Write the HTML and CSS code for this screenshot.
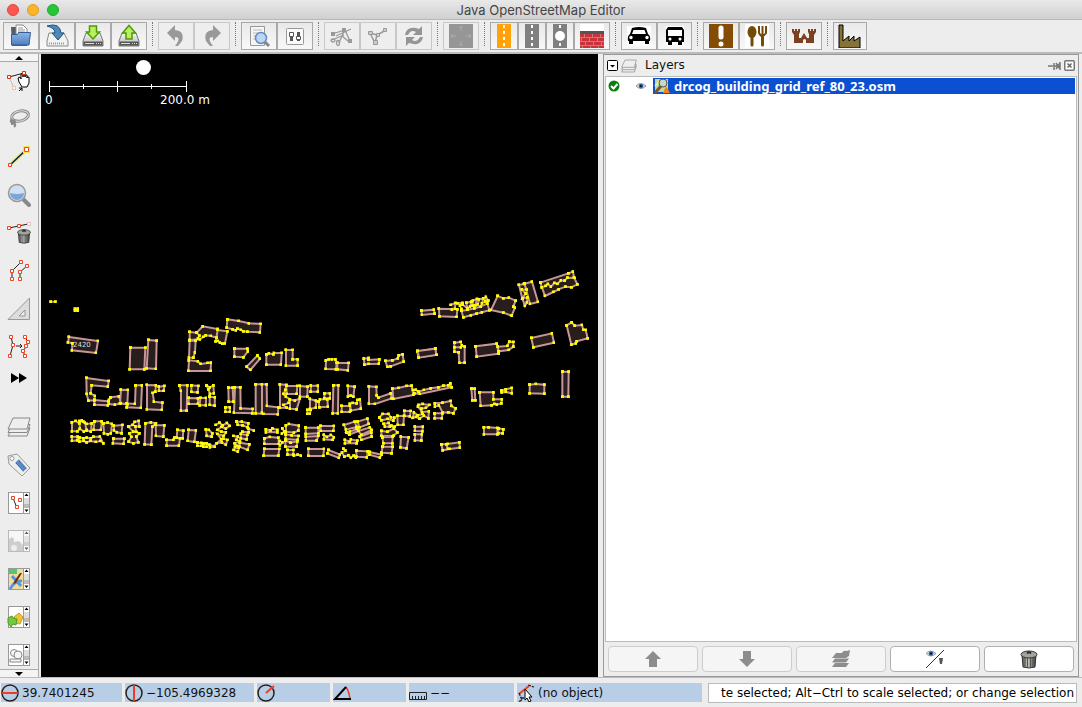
FILE: index.html
```html
<!DOCTYPE html>
<html lang="en">
<head>
<meta charset="utf-8">
<title>Java OpenStreetMap Editor</title>
<link rel="stylesheet" href="styles.css">
</head>
<body>
<svg class="defs" aria-hidden="true">
  <defs>
    <linearGradient id="blue" x1="0" y1="0" x2="0" y2="1"><stop offset="0" stop-color="#8fb5e2"/><stop offset="1" stop-color="#4c80be"/></linearGradient>
    <linearGradient id="metal" x1="0" y1="0" x2="0" y2="1"><stop offset="0" stop-color="#f4f4f2"/><stop offset="1" stop-color="#b4b6b2"/></linearGradient>
    <linearGradient id="can" x1="0" y1="0" x2="1" y2="0"><stop offset="0" stop-color="#4a4a46"/><stop offset=".4" stop-color="#c9c9c2"/><stop offset="1" stop-color="#3c3c38"/></linearGradient>
    <marker id="node" markerUnits="userSpaceOnUse" markerWidth="9" markerHeight="9" refX="4.500" refY="4.500"><rect width="9" height="9" fill="#ff0"/></marker>
    <symbol id="drive" viewBox="0 0 24 24"><path d="M5 9h14l3 8v5H2v-5z" fill="url(#metal)" stroke="#777" /><path d="M2.500 17.500h19v4h-19z" fill="#555"/><path d="M4 19.500h9M15 19.500h1m1 0h1m1 0h1" stroke="#ddd"/></symbol>
    <symbol id="lens" viewBox="0 0 24 24"><path d="M16 16l6 6" stroke="#888" stroke-width="4" stroke-linecap="round"/><circle cx="10" cy="10" r="8.500" fill="#cfe0f2" stroke="#999" stroke-width="1.500"/><path d="M3 10a7 7 0 0 0 14 0q-7 2-14 0z" fill="#7ba6d6"/></symbol>
    <symbol id="trash" viewBox="0 0 20 20"><path d="M3 6h14l-1 12q-6 2-12 0z" fill="url(#can)" stroke="#333"/><path d="M6 9v9M8.500 9v10M11.500 9v10M14 9v9" stroke="#555"/><ellipse cx="10" cy="5.500" rx="8" ry="3.500" fill="#a3a39d" stroke="#333"/><path d="M8 4.500q2-3 4 0" fill="#444" stroke="#222" stroke-width="1.500"/></symbol>
    <symbol id="eye" viewBox="0 0 12 8"><path d="M0 4q5-6 12 0q-6 6-12 0z" fill="#ddd" stroke="#888"/><circle cx="6" cy="4" r="2.800" fill="#3465a4"/><circle cx="6" cy="4" r="1.300" fill="#012"/></symbol>
    <symbol id="sheets" viewBox="0 0 24 24"><g fill="#eee" stroke="#888"><path d="M1 21l4-8h18l-3 8z"/><path d="M1 17.500l4-8h18l-3 8z"/><path d="M1 14l5-11h17l-3 11z"/></g></symbol>
    <symbol id="panel" viewBox="0 0 24 24"><rect x="1.500" y="1.500" width="21" height="21" fill="#fff" stroke="#999"/><path d="M16.500 2v20" stroke="#999"/><path d="M17 7h5v6h-5z" fill="#ddd"/><path d="M17 13h5v4h-5z" fill="#bbb"/><path d="M17.500 5h4l-2-2.500zM17.500 18.500h4l-2 2.500z" fill="#000"/></symbol>
  </defs>
</svg>

<header class="titlebar">
  <div class="lights"><button class="light close" aria-label="Close"></button><button class="light minimize" aria-label="Minimize"></button><button class="light expand" aria-label="Zoom"></button></div>
  <h1>Java OpenStreetMap Editor</h1>
</header>

<nav class="toolbar" aria-label="Tools">
  <div class="group">
    <button aria-label="Open"><svg class="icon" viewBox="0 0 24 24"><path d="M2 3h6l1 2h9v17H3z" fill="#555f68"/><path d="M7 1h7l4 4v8H7z" fill="#fff" stroke="#888"/><path d="M9 4h5M9 6h7M9 8h7" stroke="#999"/><path d="M2.500 21V10.500h6l1-2h12L20 21z" fill="url(#blue)" stroke="#335f98"/></svg></button>
    <button aria-label="Save"><svg class="icon" viewBox="0 0 24 24"><path d="M4 9h15l4 8v5H2v-5z" fill="#f2f2f0" stroke="#888"/><path d="M4 19.500h16" stroke="#999" stroke-width="2" stroke-dasharray="1 1"/><path d="M2 2q13-4 14 7h3l-6 7-6-7h3q0-5-8-7z" fill="#4d88b9" stroke="#235683"/></svg></button>
    <button aria-label="Download"><svg class="icon" viewBox="0 0 24 24"><use href="#drive"/><path d="M8.500 2h7v6h3L12 15 5.500 8h3z" fill="#baf060" stroke="#4e9a06" stroke-width="1.500"/></svg></button>
    <button aria-label="Upload"><svg class="icon" viewBox="0 0 24 24"><use href="#drive"/><path d="M9 15V9H5.500L12 1.500 18.500 9H15v6z" fill="#baf060" stroke="#4e9a06" stroke-width="1.500"/></svg></button>
  </div>
  <span class="sep"></span>
  <div class="group off">
    <button disabled aria-label="Undo"><svg class="icon" viewBox="0 0 24 24"><path d="M3 9l8-8v5q10 1 7 11l-4 5h-3q7-9 0-9v4z" fill="#999"/></svg></button>
    <button disabled aria-label="Redo"><svg class="icon" viewBox="0 0 24 24"><path d="M21 9l-8-8v5Q3 7 6 17l4 5h3q-7-9 0-9v4z" fill="#999"/></svg></button>
  </div>
  <span class="sep"></span>
  <div class="group">
    <button aria-label="Search"><svg class="icon" viewBox="0 0 24 24"><path d="M3.500 2.500h14v19h-14z" fill="#f5f5f3" stroke="#999"/><path d="M6 6h9M6 9h6M6 12h3M6 15h3" stroke="#bbb"/><path d="M18 18l4 4" stroke="#888" stroke-width="3"/><circle cx="14" cy="14" r="5.500" fill="#bcd5f4" stroke="#668bc0" stroke-width="1.500"/></svg></button>
    <button aria-label="Preferences"><svg class="icon" viewBox="0 0 24 24"><rect x="3.500" y="4.500" width="17" height="16" rx="1" fill="#fafafa" stroke="#999"/><path d="M8.500 8v9M15.500 8v9" stroke="#555" stroke-width="3"/><path d="M6.500 8.500h4v4h-4zM13.500 12.500h4v3h-4z" fill="#fff" stroke="#555"/></svg></button>
  </div>
  <span class="sep"></span>
  <div class="group off">
    <button disabled aria-label="Split way"><svg class="icon" viewBox="0 0 24 24"><g fill="none" stroke="#999" stroke-width="1.300"><path d="M2 10l13-4 5 11M6 12l15-7M9 19l6-14M12 12l6 5M2 16l12-5"/><ellipse cx="8" cy="19" rx="1.500" ry="2.500"/><ellipse cx="3" cy="16.500" rx="2" ry="1.500"/></g><path d="M1 8h4v4H1zM12 4h4v4h-4zM18 15h4v4h-4z" fill="#999"/></svg></button>
    <button disabled aria-label="Combine way"><svg class="icon" viewBox="0 0 24 24"><path d="M4 9l5 10 2-8 9-5M4 9l7 2" fill="none" stroke="#999" stroke-width="1.500"/><path d="M2.500 7.500h4v3h-4zM7.500 16.500h4v4h-4zM10.500 9.500h3v3h-3zM17.500 4.500h3v3h-3z" fill="#ccc" stroke="#999"/></svg></button>
    <button disabled aria-label="Update"><svg class="icon" viewBox="0 0 24 24"><path d="M3 11q2-10 14-6l3-3v9h-9l3-3q-5-3-8 3zM21 13q-2 10-14 6l-3 3v-9h9l-3 3q5 3 8-3z" fill="#959595"/></svg></button>
  </div>
  <span class="sep"></span>
  <div class="group off"><button disabled aria-label="Imagery"><svg class="icon" viewBox="0 0 24 24"><path d="M0 0h24v24H0z" fill="#969696"/><path d="M12 2v5m-2-3 2-2 2 2M12 22v-5m-2 3 2 2 2-2M2 12h5M4 10l-2 2 2 2M22 12h-5m3-2 2 2-2 2" fill="none" stroke="#acacac"/></svg></button></div>
  <span class="sep"></span>
  <div class="group">
    <button class="narrow" aria-label="Primary road"><svg class="icon" viewBox="0 0 24 24"><path d="M5 0h14v24H5z" fill="#ffa20c"/><path d="M12 1v22" stroke="#fff" stroke-width="2" stroke-dasharray="3 3"/></svg></button>
    <button class="narrow" aria-label="Road"><svg class="icon" viewBox="0 0 24 24"><path d="M5 0h14v24H5z" fill="#808080"/><path d="M12 1v22" stroke="#fff" stroke-width="2" stroke-dasharray="3 3"/></svg></button>
    <button class="narrow" aria-label="Roundabout"><svg class="icon" viewBox="0 0 24 24"><path d="M5 0h14v24H5z" fill="#808080"/><path d="M12 1v22" stroke="#fff" stroke-width="2" stroke-dasharray="3 3"/><circle cx="12" cy="12" r="5" fill="#fff"/></svg></button>
    <button aria-label="Wall"><svg class="icon" viewBox="0 0 24 24"><path d="M0 0h24v24H0z" fill="#fff"/><path d="M0 9h24v15H0z" fill="#cb333b"/><path d="M0 7h24v3H0z" fill="#555"/><path d="M0 13.500h24M0 17.500h24M0 21.500h24M4.500 10v3m8-3v3m8-3v3M1.500 14v3m8-3v3m8-3v3M5.500 18v3m8-3v3m8-3v3M2.500 22v2m8-2v2m8-2v2" stroke="#b98083"/></svg></button>
  </div>
  <span class="sep"></span>
  <div class="group">
    <button aria-label="Car"><svg class="icon" viewBox="0 0 24 24"><path d="M0 2h24v20H0z" fill="#fff"/><path d="M5 4q7-2 14 0l2 6q3 2 2 7h-1v3h-4v-3H6v3H2v-3H1q-1-5 2-7z"/><path d="M6.500 6h11l1.500 4H5z" fill="#fff"/><circle cx="4" cy="13.500" r="1.700" fill="#fff"/><circle cx="20" cy="13.500" r="1.700" fill="#fff"/></svg></button>
    <button class="mid" aria-label="Bus"><svg class="icon" viewBox="0 0 24 24"><path d="M3 2h18v20H3z" fill="#fff"/><path d="M5 3h14l2 3v12h-2v3h-4v-3H9v3H5v-3H3V6z"/><path d="M5 6h14v6H5z" fill="#fff"/><circle cx="7" cy="15" r="1.500" fill="#fff"/><circle cx="17" cy="15" r="1.500" fill="#fff"/></svg></button>
  </div>
  <span class="sep"></span>
  <div class="group">
    <button aria-label="Attraction"><svg class="icon" viewBox="0 0 24 24"><path d="M0 0h24v24H0z" fill="#854c05"/><path d="M12 4v9" stroke="#fff" stroke-width="5" stroke-linecap="round"/><circle cx="12" cy="20" r="2.500" fill="#fff"/></svg></button>
    <button aria-label="Restaurant"><svg class="icon" viewBox="0 0 24 24"><path d="M0 0h24v24H0z" fill="#fff"/><ellipse cx="7" cy="8" rx="4.500" ry="6" fill="#734a08"/><path d="M7 12v9M17.500 12v9" stroke="#734a08" stroke-width="3" stroke-linecap="round"/><path d="M14 2v7q3 6 7 0V2M17.500 2v10" fill="none" stroke="#734a08" stroke-width="2"/></svg></button>
  </div>
  <span class="sep"></span>
  <div class="group"><button aria-label="Castle"><svg class="icon" viewBox="0 0 24 24"><path d="M0 5h2v2h1V5h2v2h1V5h2v3l-1 2v4h2l3-5 3 5h2v-4l-1-2V5h2v2h1V5h2v2h1V5h2v3l-2 3v8h-8v-3q-1.500-2-3 0v3H2v-8L0 8z" fill="#7c4121"/></svg></button></div>
  <span class="sep"></span>
  <div class="group"><button class="factory" aria-label="Industry"><svg class="icon" viewBox="0 0 24 24"><path d="M1 24V1h4v16l6-5v5l5-5v5l6-4v11z" fill="#847239" stroke="#000"/></svg></button></div>
</nav>

<main class="workspace">
  <aside class="sidebar">
    <button class="scroll" aria-label="Scroll up"><svg viewBox="0 0 10 6"><path d="M1 5h8L5 1z"/></svg></button>
    <div class="modes">
      <button aria-label="Select"><svg class="icon" viewBox="0 0 24 24"><path d="M2 8l15-4" stroke="#222"/><path d="M2 8l5 11" stroke="#bbb"/><path d="M12 13l-1-4 2-1 1 2V5h2v3-3h2v3-2h2v3-1h2v6l-2 4h-5z" fill="#fff" stroke="#000"/><path d="M12 22l3-3m-3 0h3v3" fill="none" stroke="#000"/><g fill="#fff" stroke="#d31"><path d="M.5 6.500h3v3h-3zM15.500 2.500h3v3h-3z"/><path d="M5.500 17.500h3v3h-3z" stroke="#eba"/></g></svg></button>
      <button aria-label="Lasso"><svg class="icon" viewBox="0 0 24 24"><ellipse cx="13" cy="9" rx="8.500" ry="5" transform="rotate(-12 13 9)" fill="none" stroke="#888" stroke-width="3"/><ellipse cx="13" cy="9" rx="8.500" ry="5" transform="rotate(-12 13 9)" fill="none" stroke="#ddd"/><path d="M5 12q-3 3 1 4t1 4M4 14q4-1 4 1t-4 2" fill="none" stroke="#888" stroke-width="2"/></svg></button>
      <button aria-label="Draw"><svg class="icon" viewBox="0 0 24 24"><path d="M3 20L20 4" stroke="#f0e58a" stroke-width="4"/><path d="M3 20L20 4" stroke="#024" stroke-width="1.500"/><path d="M16 1h7v7h-7z" fill="#f3e64d"/><path d="M1.500 18.500h3v3h-3zM17.500 2.500h4v4h-4z" fill="#fff" stroke="#e42"/></svg></button>
      <button aria-label="Zoom"><svg class="icon" viewBox="0 0 24 24"><use href="#lens"/></svg></button>
      <button aria-label="Delete"><svg class="icon" viewBox="0 0 24 24"><path d="M2 7l19-4" stroke="#222"/><path d="M.5 5.500h3v3h-3zM10.500 3.500h3v3h-3z" fill="#fff" stroke="#e42"/><path d="M20.500 1.500h3v3h-3z" fill="#fff" stroke="#ebb"/><use href="#trash" x="9" y="6" width="16" height="18"/></svg></button>
      <button aria-label="Parallel"><svg class="icon" viewBox="0 0 24 24"><path d="M5 20v-8L14 3M13 20v-7l7-6" fill="none" stroke="#222"/><path d="M3.500 18.500h3v3h-3zM3.500 10.500h3v3h-3zM12.500 1.500h3v3h-3zM11.500 18.500h3v3h-3zM11.500 11.500h3v3h-3zM18.500 5.500h3v3h-3z" fill="#fff" stroke="#e42"/></svg></button>
      <button aria-label="Extrude"><svg class="icon" viewBox="0 0 24 24"><path d="M1 22.500L22.500 1v21.500zM12 19h6v-6z" fill="#ddd" fill-rule="evenodd" stroke="#999"/></svg></button>
      <button aria-label="Improve way accuracy"><svg class="icon" viewBox="0 0 24 24"><path d="M3 21l3-11-2-8M18 21l-2-5 3-4 2-5-3-5M9 11h6m-2-2 2 2-2 2" fill="none" stroke="#222"/><path d="M1.500 19.500h3v3h-3zM4.500 8.500h3v3h-3zM2.500.5h3v3h-3zM16.500 19.500h3v3h-3zM14.500 14.500h3v3h-3zM17.500 9.500h3v3h-3zM19.500 5.500h3v3h-3zM16.500.5h3v3h-3z" fill="#fff" stroke="#e42"/></svg></button>
      <button class="more" aria-label="More"><svg class="icon" viewBox="0 0 24 24"><path d="M4 7l8 5-8 5zM12 7l8 5-8 5z"/></svg></button>
    </div>
    <div class="toggles">
      <button aria-label="Layers"><svg class="icon" viewBox="0 0 24 24"><use href="#sheets"/></svg></button>
      <button aria-label="Tags"><svg class="icon" viewBox="0 0 24 24"><path d="M1 3l9-2 13 14-8 8L2 11z" fill="#eee" stroke="#999"/><circle cx="5" cy="5.500" r="2" fill="#fff" stroke="#999"/><path d="M10 8l8 9" stroke="#5d8cc4" stroke-width="5"/><path d="M9 10l8 8M12 8l7 8" stroke="#3a679c" stroke-dasharray="2 1"/></svg></button>
      <button aria-label="Selection"><svg class="icon" viewBox="0 0 24 24"><use href="#panel"/><path d="M6 7l4 10" stroke="#222"/><path d="M4.500 5.500h3v3h-3zM11.500 7.500h3v3h-3zM8.500 14.500h3v3h-3z" fill="#fff" stroke="#e42"/></svg></button>
      <button class="dim" aria-label="Relations"><svg class="icon" viewBox="0 0 24 24"><use href="#panel"/><path d="M2 10l3-2 2 2v3l5-1 4 4v6H2z" fill="#bbb"/><circle cx="7" cy="19" r="3" fill="#eee"/></svg></button>
      <button aria-label="Map styles"><svg class="icon" viewBox="0 0 24 24"><use href="#panel"/><path d="M2 2h14v20H2z" fill="#eedda0"/><path d="M2 2h8v5H2z" fill="#56c76c"/><path d="M3 22q5-9 12-8M5 9l9 10" fill="none" stroke="#5596e0" stroke-width="3"/><path d="M15 6l-6 10-3 1 2-4 5-7z" fill="#792c0c"/></svg></button>
      <button aria-label="History"><svg class="icon" viewBox="0 0 24 24"><use href="#panel"/><path d="M7 12l5-4 4 4-3 7-6-1z" fill="#ecc43b" stroke="#c69b21"/><path d="M1 13l4-2 1 2 4 1-1 6-3-1-2 3-3-4z" fill="#73c940" stroke="#4e9a26"/></svg></button>
      <button aria-label="Notes"><svg class="icon" viewBox="0 0 24 24"><use href="#panel"/><g fill="#f5f5f5" stroke="#888"><circle cx="7" cy="10" r="3.500"/><circle cx="11" cy="12" r="4"/><path d="M3 16h11v3H3z"/></g></svg></button>
    </div>
    <button class="scroll" aria-label="Scroll down"><svg viewBox="0 0 10 6"><path d="M1 1h8L5 5z"/></svg></button>
  </aside>

  <section class="map" aria-label="Map view">
    <svg class="canvas" viewBox="41 54 557 623" preserveAspectRatio="xMinYMin slice">
      <circle cx="143.500" cy="67.500" r="7.500" fill="#fff"/>
      <path d="M49.500 81v11M186.500 81v11M117.500 81v11M83.500 84v5M151.500 84v5M49 86.500h138" stroke="#fff"/>
      <text class="scale" x="45" y="104">0</text><text class="scale" x="160" y="104">200.0 m</text>
      <g class="buildings" transform="translate(40 290) scale(.333333)">
        <path d="M32 35H46M105 56L113 62M113 56L105 62"/>
        <path d="M87 141L174 153 168 189 96 181 97 160 84 157zM271 173L316 173 313 238 269 238zM325 150L350 152 348 237 320 235zM449 126L470 128 488 109 533 117 530 143 513 138 497 136 490 141 480 148 449 150zM470 128L478 137 474 145M449 152L467 152 465 187 460 203 447 203zM447 211L474 214 482 222 503 219 513 218 512 243 445 243zM533 120L562 124 555 160 547 161 540 158 534 153 527 154zM562 88L596 93 627 100 662 102 660 127 622 125 610 124 603 120 592 116 588 121 578 118 560 113zM583 176L622 176 624 184 610 202 583 200zM652 197L660 206 631 240 620 230z"/>
        <path d="M139 264L206 273 204 290 155 286 152 310 165 318 163 331 145 332 140 312zM163 330L206 334 204 346 163 344zM211 322L237 319 243 340 225 344 207 342 207 330zM243 299L264 300 262 343 240 340zM287 286L306 286 303 354 260 352 260 340 285 342zM321 285L348 286 346 305 338 309 342 335 367 338 366 360 321 358zM357 290L373 288 371 303 357 303zM418 286L442 286 440 362 423 362 423 303zM454 286L475 288 473 307 454 306zM500 287L510 292 520 286 522 310 510 312 505 298zM446 324L474 325 474 342 446 342zM481 324L498 324 498 346 479 346zM509 320L525 322 524 347 509 345zM565 293L578 293 580 335 566 335zM585 292L601 292 602 355 638 357 637 370 582 368zM556 352L570 352 570 366 556 366z"/>
        <path d="M96 397L107 393 118 400 126 391 130 395 140 402 155 400 153 425 140 420 132 425 120 417 112 424 96 424zM118 393L120 417M135 398L140 422M163 394L185 394 183 420 161 420zM190 400L203 398 216 402 213 430 204 433 192 430zM222 407L247 405 245 430 231 427 222 421zM220 446L253 446 251 462 219 460zM265 410L278 405 284 396 296 393 298 410 286 409 289 426 298 430 289 440 295 457 280 460 266 455 274 441 268 430 280 425zM96 440L113 440 112 451 96 453zM118 442L130 445 140 443 153 445 160 440 180 440 190 460 181 453 168 456 151 453 140 457 131 453 118 455zM316 400L333 397 348 400 337 410 334 464 314 463zM347 405L373 406 370 440 348 438zM380 450L400 450 403 443 420 445 417 467 380 467zM412 420L430 422 428 445 410 443zM446 420L468 421 463 456 443 453zM498 418L507 420 517 430 515 440 500 438zM472 458L484 459 484 468 472 468zM490 460L500 460 500 471 490 470zM508 464L525 470 510 472M527 405L538 398 548 406 561 399 569 408 558 416 544 411 532 420 544 425 558 427 551 438 532 432 544 448 530 460 546 457 558 465 562 450 550 446"/>
      </g>
      <g class="buildings" transform="translate(220 330) scale(.333333)">
        <path d="M139 74L147 70 160 73 162 69 185 69 183 104 139 104zM198 60L218 60 218 88 233 88 233 107 198 107zM318 92L326 88 336 88 346 88 350 99 348 118 317 117zM352 99L386 99 384 121 352 118zM432 86L446 84 445 90 478 88 477 101 446 102 433 104zM496 93L517 91 534 85 536 76 548 73 551 95 512 109 502 111zM592 65L646 55 649 74 595 82z"/>
        <path d="M107 163L140 163 141 228 175 232 174 253 130 252 107 250zM126 163L126 248M180 163L199 165 196 180 190 192 198 200 210 208 206 219 190 225 200 233 180 234zM199 168L232 168 230 192 200 192zM240 168L263 170 262 200 240 200zM273 167L294 167 294 185 272 185zM313 190L330 190 330 205 313 205zM210 208L225 212 240 205 230 238 210 236zM270 207L288 212 288 233 270 237zM296 215L300 208 322 208 324 230 298 232zM262 240L272 240 270 252 262 252zM340 166L355 166 354 250 338 250zM384 168L404 170 400 200 392 197 384 200zM365 228L390 228 390 246 365 246zM390 222L398 219 410 220 412 210 420 208 423 236 393 242zM447 169L469 171 470 196 475 203 512 190 515 205 465 222 447 221zM517 176L535 174 560 168 575 167 580 195 520 207zM588 180L595 185 612 180 632 175 655 172 670 167 685 166 691 160 695 172 600 192 583 190 579 180z"/>
        <path d="M532 258L552 258 550 285 533 285zM553 243L572 243 570 259 553 258zM585 290L609 290 607 304 585 303zM585 313L606 313 604 332 585 331zM543 320L566 322 560 355 541 352zM478 262L488 252 505 252 513 262 523 263 520 272 503 267 484 271zM491 282L506 279 510 290 495 290zM484 303L502 305 522 296 525 290 514 287 532 307 521 317 484 318zM487 322L518 320 517 340 490 340zM488 350L518 350 515 370 484 368zM372 285L404 275 410 291 378 299zM413 275L442 266 446 282 418 292zM379 308L390 305 410 297 415 303 388 314zM415 303L450 292 455 300 424 315zM420 320L454 308 455 320 424 330zM375 330L390 335 393 328 412 332 410 340 375 340zM257 293L295 293 295 310 257 312zM302 288L342 288 340 303 302 303zM258 320L295 318 290 332 258 332zM312 315L321 321 333 315 342 322 338 330 312 328zM198 287L207 282 237 287 235 302 222 308 198 305zM187 295L193 305 186 311M197 313L215 316 236 318 233 330 197 327zM196 332L212 338 232 334 230 350 196 350zM180 333L187 337 180 346M202 360L220 360 220 374 202 374zM222 377L233 374 243 377M138 298L152 301 157 295 172 300 172 307 138 307zM133 325L150 321 175 323 177 342 133 342zM133 357L178 357 175 377 131 377zM265 357L312 357 310 378 265 378zM325 360L360 374 357 384 322 370zM370 356L376 362 366 368 373 380 385 376 393 384 401 377 408 384M409 362L443 364 441 382 409 380zM448 366L485 374 480 383 448 374z"/>
        <path d="M50 275L66 275 85 280 83 292 68 286 53 285zM67 305L86 307 85 296 102 302M63 312L82 315 80 328 62 325zM40 318L54 320 49 330 60 334 44 340 52 348 41 360 54 365 57 354 45 350M60 338L88 343 83 360 58 350z"/>
      </g>
      <g class="buildings" transform="translate(400 260) scale(.333333)">
        <path d="M64 152L102 149 104 161 66 165zM117 146L172 148 170 171 118 169zM152 135L166 129 165 147 156 149M172 130L187 129 180 137 184 147M188 134L202 145 199 128 214 125 210 140 218 137 219 122 231 117 226 136 234 133 237 118 250 115 246 130 256 124 258 111 265 122M184 152L202 150 223 145 242 140 262 130 268 151 246 157 230 161 213 166 190 172zM293 108L310 115 327 113 347 122 340 140 345 143 335 167 310 158 273 150zM357 75L372 72 380 89 366 88 377 101 367 115 382 112 381 127 375 138 367 116zM374 71L396 65 414 126 390 132zM421 68L505 40 519 35 522 52 532 73 514 82 496 80 476 88 460 96 435 108zM425 82L437 78 444 72 453 80 463 69 472 72 483 61 494 62 502 53 525 54"/>
        <path d="M53 273L106 266 109 285 57 293zM163 248L182 246 186 256 194 260 194 308 178 309 176 277 163 275zM163 262L183 262M227 259L290 251 296 281 230 290zM294 260L322 258 328 245 340 246 340 260 326 270 296 274zM394 234L456 220 462 248 400 262zM500 196L515 187 524 197 546 195 550 210 557 210 563 235 530 244 528 250 514 254z"/>
        <path d="M214 386L224 386 226 421 217 421zM239 397L280 397 280 418 306 418 304 430 291 434 283 432 275 436 242 438zM304 392L317 388 335 384 336 400 318 396 305 397zM389 374L408 372 433 374 433 401 389 400zM487 335L506 335 505 410 487 410z"/>
        <path d="M55 435L68 432 88 435 78 444 64 446 54 440 66 456 87 454 85 475 72 467 59 476 48 471 38 474 42 457 53 466 68 462M105 430L127 428 152 423 154 438 167 445 160 460 145 457 128 458 117 436 105 440zM104 460L127 460 126 475 104 475zM252 502L266 502 292 504 292 523 252 523zM295 505L310 508 308 520 295 520zM124 553L143 552 178 547 180 563 150 567 128 571zM139 553L144 567"/>
      </g>
      <text class="house" x="73" y="347">2420</text>
    </svg>
  </section>

  <section class="panel" aria-label="Layers">
    <header class="panel-head">
      <button class="fold" aria-label="Collapse"><svg viewBox="0 0 11 11"><rect x=".5" y=".5" width="10" height="10" rx="1" fill="#fff" stroke="#000"/><path d="M3 5h5L5.500 7.500z"/></svg></button>
      <svg class="head-icon" viewBox="0 0 24 24"><use href="#sheets"/></svg>
      <h2>Layers</h2>
      <button class="pin" aria-label="Pin"><svg viewBox="0 0 14 10"><path d="M0 5h5M6 2v7M6 5h5M12 1v8M8 2l4 6M8 8l4-6" fill="none" stroke="#777" stroke-width="1.500"/></svg></button>
      <button class="fold" aria-label="Close panel"><svg viewBox="0 0 11 11"><rect x=".75" y=".75" width="9.500" height="9.500" rx="1" fill="#fff" stroke="#777" stroke-width="1.500"/><path d="M3.500 3.500l4 4m0-4l-4 4" stroke="#666" stroke-width="1.500"/></svg></button>
    </header>
    <div class="list">
      <div class="layer">
        <svg class="check" viewBox="0 0 12 12"><circle cx="6" cy="6" r="5.500" fill="#07810b"/><path d="M3 6l2.500 2.500L9.500 4" fill="none" stroke="#fff" stroke-width="2"/></svg>
        <svg class="eye" viewBox="0 0 12 8"><use href="#eye"/></svg>
        <div class="layer-name"><svg class="layer-icon" viewBox="0 0 16 16"><path d="M1 1h13v13H1z" fill="#bddc9a"/><path d="M1 8l6-6M2 14L8 6" stroke="#f3e9b0" stroke-width="2"/><path d="M1 15l6-7" stroke="#7b542e" stroke-width="3"/><circle cx="9" cy="5" r="4" fill="#c8d6c5" stroke="#555"/><path d="M9 15l3-7 4 7z" fill="#f58113"/></svg><span>drcog_building_grid_ref_80_23.osm</span></div>
      </div>
    </div>
    <div class="actions">
      <button disabled aria-label="Move up"><svg viewBox="0 0 20 20"><path d="M10 2l8 8h-4v8H6v-8H2z" fill="#8d8d8d"/></svg></button>
      <button disabled aria-label="Move down"><svg viewBox="0 0 20 20"><path d="M10 18l8-8h-4V2H6v8H2z" fill="#8d8d8d"/></svg></button>
      <button disabled aria-label="Merge"><svg viewBox="0 0 20 20"><path d="M1 18l3-4h14l-3 4zM1 13.500l3-4h14l-3 4zM1 9l4-5h6q1-3 5-2l3-1-1 6-3 2z" fill="#8d8d8d"/></svg></button>
      <button aria-label="Show or hide"><svg viewBox="0 0 20 20"><use href="#eye" x="1" y="1" width="10" height="7"/><path d="M1 19L19 1" stroke="#333"/><path d="M14 9h4l-1 6h-2z" fill="#555"/></svg></button>
      <button aria-label="Delete layer"><svg viewBox="0 0 20 20"><use href="#trash"/></svg></button>
    </div>
  </section>
</main>

<footer class="status">
  <div class="cell lat"><svg viewBox="0 0 18 18"><circle cx="9" cy="9" r="8" fill="none" stroke="#222" stroke-width="1.500"/><path d="M1 9h16" stroke="#f33b1d" stroke-width="2"/></svg><span>39.7401245</span></div>
  <div class="cell lon"><svg viewBox="0 0 18 18"><circle cx="9" cy="9" r="8" fill="none" stroke="#222" stroke-width="1.500"/><path d="M9 1v16" stroke="#f33b1d" stroke-width="2"/></svg><span>−105.4969328</span></div>
  <div class="cell heading"><svg viewBox="0 0 18 18"><circle cx="9" cy="9" r="8" fill="none" stroke="#222" stroke-width="1.500"/><path d="M9 9l8-7" stroke="#f33b1d" stroke-width="2"/></svg></div>
  <div class="cell angle"><svg viewBox="0 0 18 18"><path d="M13 3q3 4 4 12" fill="none" stroke="#f33b1d" stroke-width="1.500"/><path d="M13 3L2 15h16" fill="none" stroke="#000" stroke-width="2"/></svg></div>
  <div class="cell dist"><svg viewBox="0 0 18 18"><path d="M.5 8.500h17v7H.500zM3.500 12v3M6.500 12v3M9.500 12v3M12.500 12v3M15.500 12v3" fill="none" stroke="#222"/></svg><span>−−</span></div>
  <div class="cell object"><svg viewBox="0 0 18 18"><path d="M2 10l10-8" stroke="#f33b1d" stroke-width="2"/><path d="M11 1l6 2M2 9l3 7-4 2M4 14h4" fill="none" stroke="#222" stroke-width="1.300" stroke-dasharray="3 1"/><path d="M8 5v11l2-2 2 4 2-1-2-4h3z" fill="#fff" stroke="#000"/></svg><span>(no object)</span></div>
  <input class="help" type="text" readonly aria-label="Help" value="te selected; Alt−Ctrl to scale selected; or change selection">
</footer>
</body>
</html>
```
FILE: styles.css
```css
* { box-sizing: border-box; }
body {
  margin: 0;
  height: 100vh;
  display: grid;
  grid-template-rows: 20px 34px minmax(0, 1fr) 30px;
  overflow: hidden;
  background: #ededed;
  color: #111;
  font: 12px/16px "DejaVu Sans", sans-serif;
}
button { margin: 0; padding: 0; border: 0; background: none; font: inherit; }
svg { display: block; flex: none; }
h1, h2 { margin: 0; font-weight: normal; }
.defs { position: absolute; width: 0; height: 0; }
.icon { width: 24px; height: 24px; }

.titlebar {
  display: grid;
  grid-template-columns: 100px 1fr 100px;
  align-items: center;
  background: linear-gradient(#e9e9e9, #d0d0d0);
  border-bottom: 1px solid #b8b8b8;
}
.titlebar h1 { font: 13px/18px Inter, sans-serif; color: #454545; text-align: center; }
.lights { display: flex; gap: 8px; padding-left: 7px; }
.light { width: 12px; height: 12px; border-radius: 50%; }
.close { background: #fc5650; border: 1px solid #e2443f; }
.minimize { background: #fdb32b; border: 1px solid #e09e22; }
.expand { background: #26c53a; border: 1px solid #1eac2c; }

.toolbar {
  display: flex;
  align-items: flex-start;
  padding: 2px 3px 0;
  border-bottom: 2px solid #bbb;
}
.group { display: flex; }
.group button {
  width: 36px;
  height: 28px;
  display: grid;
  place-items: center;
  border: 1px solid #a9a9a9;
  background: linear-gradient(#e9e9e9, #f8f8f8);
}
.group button.narrow { width: 28px; }
.group button.mid { width: 35px; }
.group button.factory { width: 34px; }
.group.off button { border-color: #c8c8c8; background: #eee; }
.sep { width: 11px; height: 24px; display: flex; justify-content: center; }
.sep::before { content: ""; border-left: 1px dotted #777; }

.workspace {
  display: grid;
  grid-template-columns: 41px minmax(0, 557fr) minmax(0, 481fr);
  padding-right: 3px;
  min-height: 0;
}
.sidebar {
  display: flex;
  flex-direction: column;
  min-height: 0;
  border-right: 1px solid #aaa;
  margin-right: 2px;
}
.scroll { flex: none; height: 8px; display: grid; place-items: center; border-bottom: 1px solid #aaa; background: #f4f4f4; }
.toggles + .scroll { border-top: 1px solid #aaa; border-bottom: 0; }
.scroll svg { width: 10px; height: 6px; }
.modes, .toggles { display: flex; flex-direction: column; }
.modes { flex: none; }
.modes button, .toggles button { flex: none; height: 38px; display: grid; place-items: center; }
.modes .more { height: 24px; }
.toggles { flex: 1; min-height: 0; overflow: hidden; padding-top: 18px; }
.toggles .dim { opacity: .6; }

.map { background: #000; overflow: hidden; }
.canvas { width: 100%; height: 100%; }
.buildings path {
  fill: #281e1e;
  stroke: #c89696;
  stroke-width: 6px;
  marker-start: url(#node);
  marker-mid: url(#node);
  marker-end: url(#node);
}
.scale { fill: #fff; font: 12px "DejaVu Sans", sans-serif; }
.house { fill: #ddd; font: 7px "DejaVu Sans", sans-serif; }

.panel {
  display: flex;
  flex-direction: column;
  min-height: 0;
  margin-left: 5px;
  border: 1px solid #999;
  padding: 0 1px;
}
.panel-head { display: flex; align-items: center; height: 21px; padding: 0 2px 0 2px; }
.panel-head h2 { flex: 1; padding: 0 0 2px 8px; font-size: 12px; line-height: 16px; }
.fold svg { width: 11px; height: 11px; }
.head-icon { width: 16px; height: 16px; margin-left: 3px; }
.pin { padding-right: 2px; }
.pin svg { width: 14px; height: 10px; }
.list { flex: 1; min-height: 0; border: 1px solid #bbb; background: #fff; padding: 1px; }
.layer { display: grid; grid-template-columns: 12px 12px 1fr; column-gap: 16px; align-items: center; padding-left: 1px; }
.layer-name {
  display: flex;
  align-items: center;
  gap: 4px;
  margin-left: -11px;
  padding-left: 1px;
  background: #0a50d0;
  color: #fff;
  font: bold 13px/16px "Noto Sans", sans-serif;
}
.check { width: 12px; height: 12px; }
.eye { width: 10px; height: 8px; }
.layer-icon { width: 16px; height: 16px; }
.actions { display: grid; grid-template-columns: repeat(5, 1fr); gap: 4px; padding: 4px 3px 4px; }
.actions button { height: 26px; display: grid; place-items: center; border: 1px solid #b0b0b0; border-radius: 4px; background: #fff; }
.actions button:disabled { border-color: #ccc; background: #f5f5f5; }
.actions svg { width: 20px; height: 20px; }

.status { display: flex; gap: 3px; padding: 5px 5px 5px 1px; border-top: 1px solid #bbb; }
.cell { display: flex; align-items: center; gap: 3px; height: 19px; background: #b8cee6; white-space: nowrap; }
.cell svg { width: 18px; height: 18px; }
.lat { width: 121px; }
.lon { width: 129px; }
.heading, .angle { width: 73px; }
.dist { width: 105px; }
.object { width: 185px; }
.help { flex: 1; min-width: 0; height: 20px; margin-left: 3px; padding: 0 2px 0 1px; border: 1px solid #bbb; background: #fff; color: #000; font: inherit; text-align: right; }
```
